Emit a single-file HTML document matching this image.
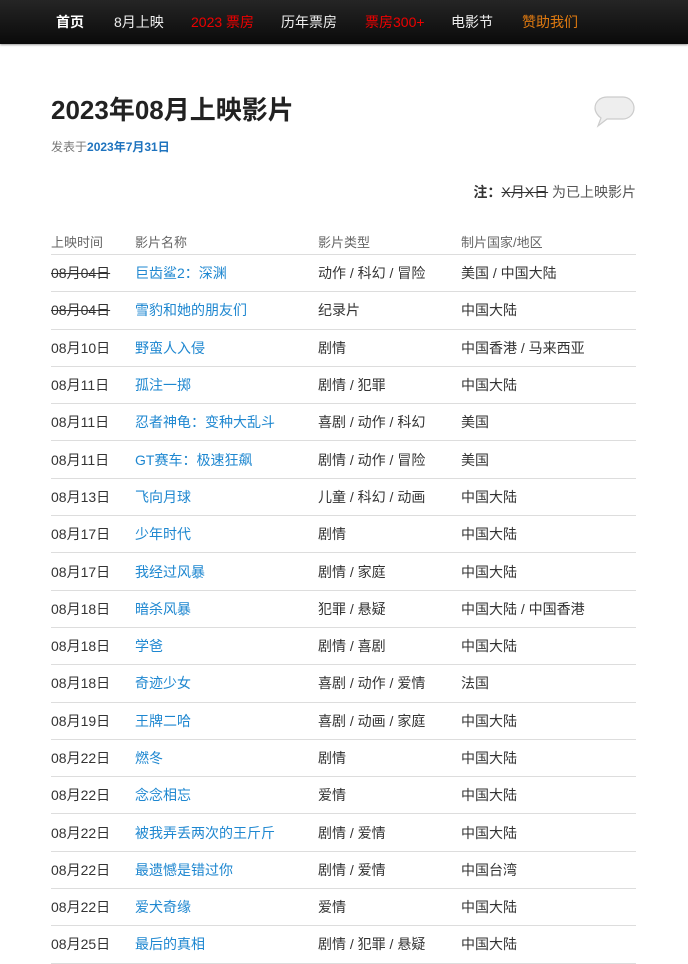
<!DOCTYPE html>
<html><head><meta charset="utf-8"><style>
body{margin:0;width:688px;height:960px;overflow:hidden;background:#fff;font-family:"Liberation Sans","Noto Sans CJK SC",sans-serif;color:#333}
.nav{height:44px;background:linear-gradient(#252525,#0a0a0a);box-shadow:0 1px 2px rgba(0,0,0,.4);position:relative}
.nav span{position:absolute;top:14px;font-size:14px;color:#eee;line-height:16px}
h1{position:absolute;left:51px;top:93px;margin:0;font-size:26px;font-weight:bold;color:#222;line-height:34px}
.meta{position:absolute;left:51px;top:138px;font-size:12px;color:#777}
.meta b{color:#1e73be}
.note{position:absolute;right:52px;top:182px;font-size:14px;color:#555}
table{position:absolute;left:51px;top:229px;width:585px;border-collapse:collapse;font-size:14px}
th{font-weight:normal;color:#666;font-size:13px;text-align:left;height:25px;padding:0;border-bottom:1px solid #ddd}
td{height:36.3px;padding:0;border-bottom:1px solid #ddd;color:#333}
td a{color:#1e87d0}
s{color:#333}
</style></head><body>
<div class="nav">
<span style="left:56px;font-weight:bold;color:#fff">首页</span>
<span style="left:114px">8月上映</span>
<span style="left:191px;color:#e00">2023 票房</span>
<span style="left:281px">历年票房</span>
<span style="left:365px;color:#e00">票房300+</span>
<span style="left:451px">电影节</span>
<span style="left:522px;color:#e07a10">赞助我们</span>
</div>
<h1>2023年08月上映影片</h1>
<svg style="position:absolute;left:593px;top:95px" width="44" height="36" viewBox="0 0 44 36"><path d="M14 2h16c6 0 11 5 11 11s-5 11-11 11H14l-9 7 3-8C5 21 2 17 2 13 2 7 7 2 14 2z" fill="#eee" stroke="#ccc" stroke-width="1.2"/></svg>
<div class="meta">发表于<b>2023年7月31日</b></div>
<div class="note"><b style="color:#333">注：</b><s>X月X日</s> 为已上映影片</div>
<table>
<tr><th style="width:84px">上映时间</th><th style="width:183px">影片名称</th><th style="width:143px">影片类型</th><th>制片国家/地区</th></tr>
<tr><td><s>08月04日</s></td><td><a>巨齿鲨2：深渊</a></td><td>动作 / 科幻 / 冒险</td><td>美国 / 中国大陆</td></tr>
<tr><td><s>08月04日</s></td><td><a>雪豹和她的朋友们</a></td><td>纪录片</td><td>中国大陆</td></tr>
<tr><td>08月10日</td><td><a>野蛮人入侵</a></td><td>剧情</td><td>中国香港 / 马来西亚</td></tr>
<tr><td>08月11日</td><td><a>孤注一掷</a></td><td>剧情 / 犯罪</td><td>中国大陆</td></tr>
<tr><td>08月11日</td><td><a>忍者神龟：变种大乱斗</a></td><td>喜剧 / 动作 / 科幻</td><td>美国</td></tr>
<tr><td>08月11日</td><td><a>GT赛车：极速狂飙</a></td><td>剧情 / 动作 / 冒险</td><td>美国</td></tr>
<tr><td>08月13日</td><td><a>飞向月球</a></td><td>儿童 / 科幻 / 动画</td><td>中国大陆</td></tr>
<tr><td>08月17日</td><td><a>少年时代</a></td><td>剧情</td><td>中国大陆</td></tr>
<tr><td>08月17日</td><td><a>我经过风暴</a></td><td>剧情 / 家庭</td><td>中国大陆</td></tr>
<tr><td>08月18日</td><td><a>暗杀风暴</a></td><td>犯罪 / 悬疑</td><td>中国大陆 / 中国香港</td></tr>
<tr><td>08月18日</td><td><a>学爸</a></td><td>剧情 / 喜剧</td><td>中国大陆</td></tr>
<tr><td>08月18日</td><td><a>奇迹少女</a></td><td>喜剧 / 动作 / 爱情</td><td>法国</td></tr>
<tr><td>08月19日</td><td><a>王牌二哈</a></td><td>喜剧 / 动画 / 家庭</td><td>中国大陆</td></tr>
<tr><td>08月22日</td><td><a>燃冬</a></td><td>剧情</td><td>中国大陆</td></tr>
<tr><td>08月22日</td><td><a>念念相忘</a></td><td>爱情</td><td>中国大陆</td></tr>
<tr><td>08月22日</td><td><a>被我弄丢两次的王斤斤</a></td><td>剧情 / 爱情</td><td>中国大陆</td></tr>
<tr><td>08月22日</td><td><a>最遗憾是错过你</a></td><td>剧情 / 爱情</td><td>中国台湾</td></tr>
<tr><td>08月22日</td><td><a>爱犬奇缘</a></td><td>爱情</td><td>中国大陆</td></tr>
<tr><td>08月25日</td><td><a>最后的真相</a></td><td>剧情 / 犯罪 / 悬疑</td><td>中国大陆</td></tr>
</table>
</body></html>
